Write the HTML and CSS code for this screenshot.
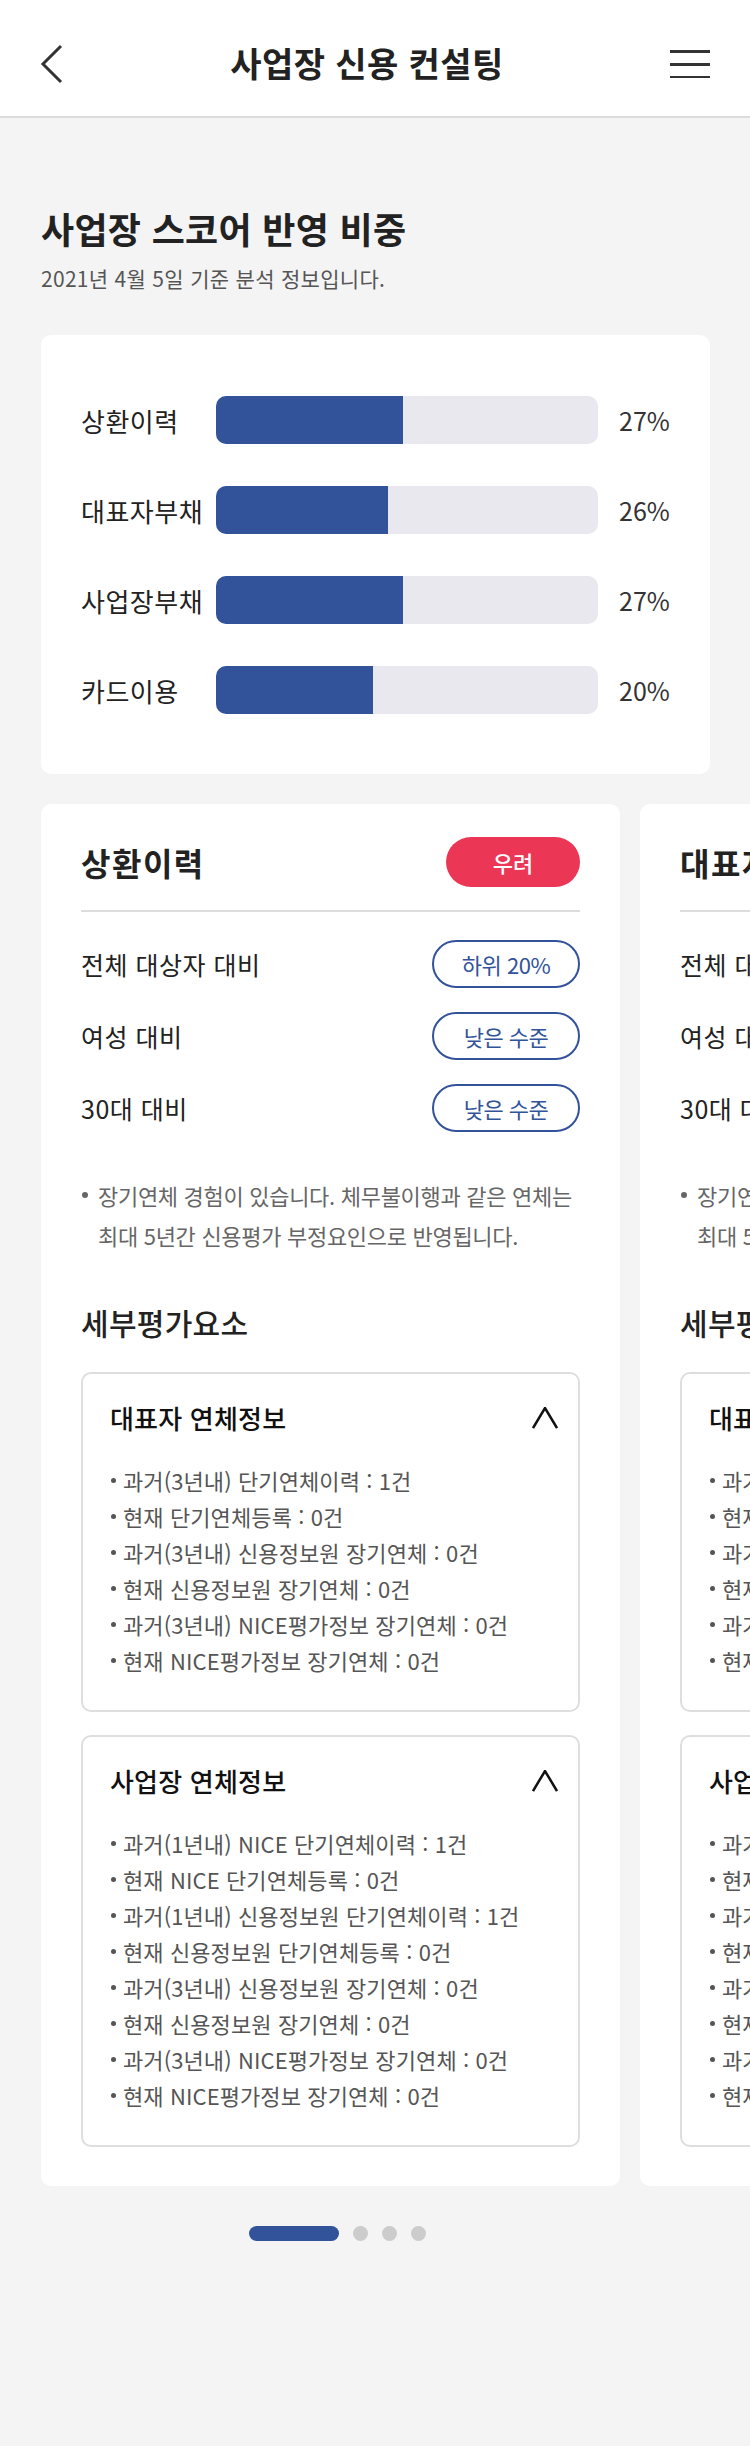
FILE: index.html
```html
<!DOCTYPE html>
<html lang="ko">
<head>
<meta charset="utf-8">
<title>사업장 신용 컨설팅</title>
<link rel="stylesheet" href="styles.css">
</head>
<body>
<header class="topbar">
  <svg class="back" width="24" height="40" viewBox="0 0 24 40"><polyline points="21,2 3,20 21,38" fill="none" stroke="#333" stroke-width="3"/></svg>
  <h1 class="topbar-title">사업장 신용 컨설팅</h1>
  <svg class="menu" width="40" height="30" viewBox="0 0 40 30"><rect x="0" y="2" width="40" height="3" fill="#333"/><rect x="0" y="15" width="40" height="3" fill="#333"/><rect x="0" y="28" width="40" height="3" fill="#333"/></svg>
</header>

<main>
  <section class="intro">
    <h2 class="intro-title">사업장 스코어 반영 비중</h2>
    <p class="intro-sub">2021년 4월 5일 기준 분석 정보입니다.</p>
  </section>

  <section class="weights">
    <div class="w-row"><span class="w-label">상환이력</span><div class="w-track"><div class="w-fill" style="width:49%"></div></div><span class="w-pct">27%</span></div>
    <div class="w-row"><span class="w-label">대표자부채</span><div class="w-track"><div class="w-fill" style="width:45%"></div></div><span class="w-pct">26%</span></div>
    <div class="w-row"><span class="w-label">사업장부채</span><div class="w-track"><div class="w-fill" style="width:49%"></div></div><span class="w-pct">27%</span></div>
    <div class="w-row"><span class="w-label">카드이용</span><div class="w-track"><div class="w-fill" style="width:41%"></div></div><span class="w-pct">20%</span></div>
  </section>

  <div class="carousel">
    <article class="card">
      <div class="card-head">
        <h3 class="card-title">상환이력</h3>
        <span class="badge">우려</span>
      </div>
      <ul class="compare">
        <li><span>전체 대상자 대비</span><span class="pill">하위 20%</span></li>
        <li><span>여성 대비</span><span class="pill">낮은 수준</span></li>
        <li><span>30대 대비</span><span class="pill">낮은 수준</span></li>
      </ul>
      <p class="note">장기연체 경험이 있습니다. 체무불이행과 같은 연체는<br>최대 5년간 신용평가 부정요인으로 반영됩니다.</p>
      <h4 class="detail-title">세부평가요소</h4>
      <div class="acc">
        <div class="acc-head"><span>대표자 연체정보</span><svg width="26" height="22" viewBox="0 0 26 22"><polyline points="1,21 13,1 25,21" fill="none" stroke="#111" stroke-width="2.5"/></svg></div>
        <ul class="acc-list">
          <li>과거(3년내) 단기연체이력 : 1건</li>
          <li>현재 단기연체등록 : 0건</li>
          <li>과거(3년내) 신용정보원 장기연체 : 0건</li>
          <li>현재 신용정보원 장기연체 : 0건</li>
          <li>과거(3년내) NICE평가정보 장기연체 : 0건</li>
          <li>현재 NICE평가정보 장기연체 : 0건</li>
        </ul>
      </div>
      <div class="acc">
        <div class="acc-head"><span>사업장 연체정보</span><svg width="26" height="22" viewBox="0 0 26 22"><polyline points="1,21 13,1 25,21" fill="none" stroke="#111" stroke-width="2.5"/></svg></div>
        <ul class="acc-list">
          <li>과거(1년내) NICE 단기연체이력 : 1건</li>
          <li>현재 NICE 단기연체등록 : 0건</li>
          <li>과거(1년내) 신용정보원 단기연체이력 : 1건</li>
          <li>현재 신용정보원 단기연체등록 : 0건</li>
          <li>과거(3년내) 신용정보원 장기연체 : 0건</li>
          <li>현재 신용정보원 장기연체 : 0건</li>
          <li>과거(3년내) NICE평가정보 장기연체 : 0건</li>
          <li>현재 NICE평가정보 장기연체 : 0건</li>
        </ul>
      </div>
    </article>

    <article class="card">
      <div class="card-head">
        <h3 class="card-title">대표자부채</h3>
        <span class="badge">우려</span>
      </div>
      <ul class="compare">
        <li><span>전체 대상자 대비</span><span class="pill">하위 20%</span></li>
        <li><span>여성 대비</span><span class="pill">낮은 수준</span></li>
        <li><span>30대 대비</span><span class="pill">낮은 수준</span></li>
      </ul>
      <p class="note">장기연체 경험이 있습니다. 체무불이행과 같은 연체는<br>최대 5년간 신용평가 부정요인으로 반영됩니다.</p>
      <h4 class="detail-title">세부평가요소</h4>
      <div class="acc">
        <div class="acc-head"><span>대표자 연체정보</span><svg width="26" height="22" viewBox="0 0 26 22"><polyline points="1,21 13,1 25,21" fill="none" stroke="#111" stroke-width="2.5"/></svg></div>
        <ul class="acc-list">
          <li>과거(3년내) 단기연체이력 : 1건</li>
          <li>현재 단기연체등록 : 0건</li>
          <li>과거(3년내) 신용정보원 장기연체 : 0건</li>
          <li>현재 신용정보원 장기연체 : 0건</li>
          <li>과거(3년내) NICE평가정보 장기연체 : 0건</li>
          <li>현재 NICE평가정보 장기연체 : 0건</li>
        </ul>
      </div>
      <div class="acc">
        <div class="acc-head"><span>사업장 연체정보</span><svg width="26" height="22" viewBox="0 0 26 22"><polyline points="1,21 13,1 25,21" fill="none" stroke="#111" stroke-width="2.5"/></svg></div>
        <ul class="acc-list">
          <li>과거(1년내) NICE 단기연체이력 : 1건</li>
          <li>현재 NICE 단기연체등록 : 0건</li>
          <li>과거(1년내) 신용정보원 단기연체이력 : 1건</li>
          <li>현재 신용정보원 단기연체등록 : 0건</li>
          <li>과거(3년내) 신용정보원 장기연체 : 0건</li>
          <li>현재 신용정보원 장기연체 : 0건</li>
          <li>과거(3년내) NICE평가정보 장기연체 : 0건</li>
          <li>현재 NICE평가정보 장기연체 : 0건</li>
        </ul>
      </div>
    </article>
  </div>

  <div class="dots">
    <span class="dot active"></span><span class="dot"></span><span class="dot"></span><span class="dot"></span>
  </div>
</main>
</body>
</html>
```

FILE: styles.css
```css
* { box-sizing: border-box; }
html, body { margin: 0; padding: 0; }
body {
  background: #f4f4f4;
  font-family: "Noto Sans CJK KR", "Noto Sans", sans-serif;
  color: #222;
  width: 750px;
  height: 2446px;
  overflow: hidden;
}
h1, h2, h3, h4, p, ul { margin: 0; padding: 0; }
ul { list-style: none; }

.topbar {
  height: 118px;
  background: #fff;
  border-bottom: 2px solid #dcdcdc;
  display: flex;
  align-items: center;
  justify-content: space-between;
  padding: 0 40px 0 40px;
}
.back { margin-top: 12px; }
.menu { margin-top: 10px; }
.topbar-title {
  font-size: 34px;
  font-weight: 700;
  color: #222;
  letter-spacing: 0.4px;
  margin-top: 8px;
}

.intro { padding: 88px 41px 0; }
.intro-title {
  font-size: 36px;
  font-weight: 700;
  line-height: 44px;
  letter-spacing: 0.3px;
  color: #222;
}
.intro-sub {
  font-size: 21px;
  line-height: 30px;
  color: #555;
  letter-spacing: 0.3px;
  margin-top: 13px;
}

.weights {
  margin: 42px 40px 0 41px;
  background: #fff;
  border-radius: 10px;
  padding: 61px 0 60px 40px;
  display: flex;
  flex-direction: column;
  gap: 42px;
}
.w-row {
  display: flex;
  align-items: center;
  height: 48px;
}
.w-label {
  width: 135px;
  font-size: 26px;
  color: #222;
  letter-spacing: 0.5px;
  white-space: nowrap;
}
.w-track {
  width: 382px;
  height: 48px;
  background: #e8e8ee;
  border-radius: 10px;
  overflow: hidden;
}
.w-fill { height: 100%; background: #32539a; }
.w-pct {
  margin-left: 21px;
  font-size: 25px;
  color: #333;
  letter-spacing: 0;
}

.carousel {
  display: flex;
  gap: 20px;
  padding-left: 41px;
  margin-top: 30px;
  overflow: hidden;
}
.card {
  flex: 0 0 579px;
  width: 579px;
  min-width: 0;
  background: #fff;
  border-radius: 10px;
  padding: 33px 40px 39px;
}
.card-head {
  display: flex;
  justify-content: space-between;
  align-items: center;
  padding-bottom: 23px;
  border-bottom: 2px solid #dddddd;
}
.card-title {
  font-size: 32px;
  font-weight: 700;
  letter-spacing: 1.5px;
  color: #222;
  white-space: nowrap;
}
.badge {
  width: 134px;
  height: 50px;
  border-radius: 25px;
  background: #ec3656;
  color: #fff;
  font-size: 22px;
  font-weight: 500;
  display: flex;
  align-items: center;
  justify-content: center;
}
.compare {
  margin-top: 28px;
  display: flex;
  flex-direction: column;
  gap: 24px;
}
.compare li {
  display: flex;
  justify-content: space-between;
  align-items: center;
  font-size: 25px;
  letter-spacing: 0.5px;
  color: #222;
  white-space: nowrap;
}
.pill {
  width: 148px;
  height: 48px;
  border: 2px solid #32539a;
  border-radius: 24px;
  color: #32539a;
  font-size: 22px;
  letter-spacing: -0.5px;
  display: flex;
  align-items: center;
  justify-content: center;
}
.note {
  margin-top: 43px;
  position: relative;
  padding-left: 17px;
  font-size: 22px;
  line-height: 40px;
  color: #666;
  letter-spacing: -0.3px;
  white-space: nowrap;
}
.note::before {
  content: "";
  position: absolute;
  left: 1px;
  top: 17px;
  width: 6px;
  height: 6px;
  border-radius: 50%;
  background: #666;
}
.detail-title {
  margin-top: 47px;
  font-size: 30px;
  line-height: 40px;
  font-weight: 500;
  letter-spacing: 0.3px;
  color: #222;
}
.acc {
  margin-top: 30px;
  border: 2px solid #dedede;
  border-radius: 10px;
  padding: 27px 20px 32px 27px;
}
.acc + .acc { margin-top: 23px; }
.acc-head {
  display: flex;
  justify-content: space-between;
  align-items: center;
  font-size: 26px;
  line-height: 34px;
  font-weight: 500;
  letter-spacing: 0.2px;
  color: #111;
  white-space: nowrap;
}
.acc-list {
  margin-top: 27px;
}
.acc-list li {
  font-size: 22px;
  line-height: 36px;
  color: #555;
  letter-spacing: 0.1px;
  position: relative;
  padding-left: 13px;
  white-space: nowrap;
}
.acc-list li::before {
  content: "";
  position: absolute;
  left: 1px;
  top: 16px;
  width: 5px;
  height: 5px;
  border-radius: 50%;
  background: #555;
}

.dots {
  display: flex;
  gap: 14px;
  padding-left: 249px;
  margin-top: 40px;
}
.dot {
  width: 15px;
  height: 15px;
  border-radius: 8px;
  background: #cccccc;
}
.dot.active { width: 90px; background: #32539a; }
```
